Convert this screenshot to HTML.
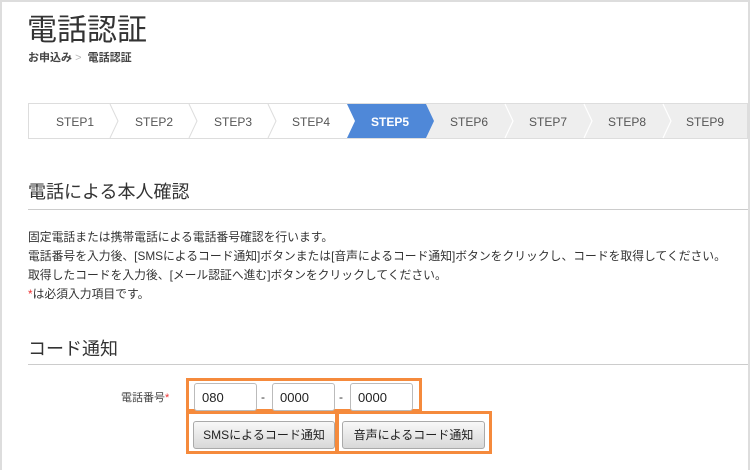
<!DOCTYPE html>
<html><head><meta charset="utf-8"><style>
*{margin:0;padding:0;box-sizing:border-box}
body{width:750px;height:470px;background:#fff;font-family:"Liberation Sans","Noto Sans CJK JP",sans-serif;color:#333;position:relative;overflow:hidden}
.a{position:absolute;white-space:nowrap}
.frame{position:absolute;left:0;top:0;width:750px;height:470px;border-left:2px solid #ddd;border-top:2px solid #ddd;border-right:2px solid #ddd}
.hr{position:absolute;left:28px;right:2px;height:1px;background:#ccc}
input{position:absolute;height:28px;border:1px solid #bbb;border-radius:3px;font:13px "Liberation Sans",sans-serif;padding-left:7px;color:#222;background:#fff}
.btn{position:absolute;height:28px;border:1px solid #aaa;border-radius:3px;background:linear-gradient(#f8f8f8,#d8d8d8);font-size:12px;text-align:center;line-height:27px;color:#222}
.ob{position:absolute;border:3px solid #f58a3c}
</style></head><body>
<div class="frame"></div>
<div class="a" style="left:27px;top:5px;font-size:30px;color:#333">電話認証</div>
<div class="a" style="left:28px;top:49px;font-size:11px;font-weight:bold;color:#444">お申込み <span style="color:#bbb;font-weight:normal">&gt;</span> &nbsp;電話認証</div>
<svg class="a" style="left:0;top:0" width="750" height="150">
<rect x="28.5" y="103.5" width="719" height="35" fill="#fff" stroke="#ddd"/>
<rect x="426" y="104" width="321" height="34" fill="#eee"/>
<polygon points="347,104 426,104 434,121 426,138 347,138 355,121" fill="#4f88d8"/>
<g fill="none" stroke="#ddd" stroke-width="1">
<polyline points="110,104 118,121 110,138"/><polyline points="189,104 197,121 189,138"/><polyline points="268,104 276,121 268,138"/>
</g>
<g fill="none" stroke="#fff" stroke-width="1.2">
<polyline points="505,104 513,121 505,138"/><polyline points="584,104 592,121 584,138"/><polyline points="663,104 671,121 663,138"/>
</g>
<g font-family="Liberation Sans,sans-serif" font-size="12" fill="#555" text-anchor="middle">
<text x="75" y="126">STEP1</text><text x="154" y="126">STEP2</text><text x="233" y="126">STEP3</text><text x="311" y="126">STEP4</text>
<text x="390" y="126" fill="#fff" font-weight="bold">STEP5</text>
<text x="469" y="126">STEP6</text><text x="548" y="126">STEP7</text><text x="627" y="126">STEP8</text><text x="705" y="126">STEP9</text>
</g></svg>
<div class="a" style="left:28px;top:178px;font-size:18px">電話による本人確認</div>
<div class="hr" style="top:209px"></div>
<div class="a" style="left:28px;top:228px;font-size:11.8px;line-height:19px;color:#333">固定電話または携帯電話による電話番号確認を行います。<br>電話番号を入力後、[SMSによるコード通知]ボタンまたは[音声によるコード通知]ボタンをクリックし、コードを取得してください。<br>取得したコードを入力後、[メール認証へ進む]ボタンをクリックしてください。<br><span style="color:#e33">*</span>は必須入力項目です。</div>
<div class="a" style="left:28px;top:335px;font-size:18px">コード通知</div>
<div class="hr" style="top:364px"></div>
<div class="a" style="left:121px;top:389px;font-size:11px;color:#444">電話番号<span style="color:#e33">*</span></div>
<div class="ob" style="left:186px;top:378px;width:236px;height:34px"></div>
<input style="left:194px;top:383px;width:63px" value="080">
<div class="a" style="left:261px;top:390px;font-size:12px">-</div>
<input style="left:272px;top:383px;width:63px" value="0000">
<div class="a" style="left:339px;top:390px;font-size:12px">-</div>
<input style="left:350px;top:383px;width:63px" value="0000">
<div class="ob" style="left:186px;top:411px;width:152px;height:43px"></div>
<div class="ob" style="left:336px;top:411px;width:156px;height:43px"></div>
<div class="btn" style="left:193px;top:421px;width:142px">SMSによるコード通知</div>
<div class="btn" style="left:342px;top:421px;width:143px">音声によるコード通知</div>
</body></html>
